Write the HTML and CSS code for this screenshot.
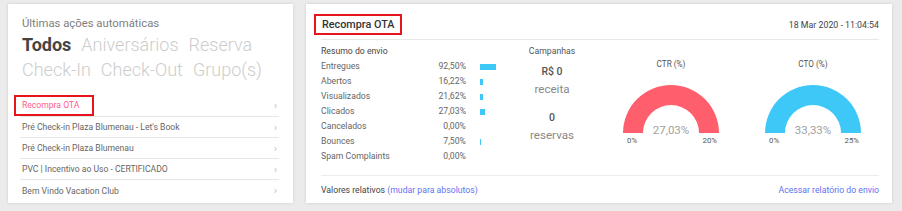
FILE: index.html
```html
<!DOCTYPE html>
<html lang="pt-BR">
<head>
<meta charset="utf-8">
<title>Ações automáticas</title>
<link rel="stylesheet" href="styles.css">
</head>
<body>
<div class="page">
  <section class="card left">
    <div class="subtitle">Últimas ações automáticas</div>
    <div class="tabs">
      <span class="tab active">Todos</span>
      <span class="tab">Aniversários</span>
      <span class="tab">Reserva</span>
      <span class="tab">Check-In</span>
      <span class="tab">Check-Out</span>
      <span class="tab">Grupo(s)</span>
    </div>
    <ul class="actions">
      <li class="action selected"><span class="mark">Recompra OTA</span><span class="chev">›</span></li>
      <li class="action"><span>Pré Check-in Plaza Blumenau - Let's Book</span><span class="chev">›</span></li>
      <li class="action"><span>Pré Check-in Plaza Blumenau</span><span class="chev">›</span></li>
      <li class="action"><span>PVC | Incentivo ao Uso - CERTIFICADO</span><span class="chev">›</span></li>
      <li class="action"><span>Bem Vindo Vacation Club</span><span class="chev">›</span></li>
    </ul>
  </section>

  <section class="card right">
    <header class="head">
      <span class="mark head-title">Recompra OTA</span>
      <span class="date">18 Mar 2020 - 11:04:54</span>
    </header>
    <div class="body">
      <div class="stats">
        <div class="stats-title">Resumo do envio</div>
        <div class="stat"><span class="lbl">Entregues</span><span class="val">92,50%</span><span class="bar-cell"><i class="bar" style="width:16px"></i></span></div>
        <div class="stat"><span class="lbl">Abertos</span><span class="val">16,22%</span><span class="bar-cell"><i class="bar" style="width:3px"></i></span></div>
        <div class="stat"><span class="lbl">Visualizados</span><span class="val">21,62%</span><span class="bar-cell"><i class="bar" style="width:3px"></i></span></div>
        <div class="stat"><span class="lbl">Clicados</span><span class="val">27,03%</span><span class="bar-cell"><i class="bar" style="width:5px"></i></span></div>
        <div class="stat"><span class="lbl">Cancelados</span><span class="val">0,00%</span><span class="bar-cell"></span></div>
        <div class="stat"><span class="lbl">Bounces</span><span class="val">7,50%</span><span class="bar-cell"><i class="bar" style="width:1px"></i></span></div>
        <div class="stat"><span class="lbl">Spam Complaints</span><span class="val">0,00%</span><span class="bar-cell"></span></div>
      </div>
      <div class="camp">
        <div class="camp-title">Campanhas</div>
        <div class="camp-num">R$ 0</div>
        <div class="camp-lbl">receita</div>
        <div class="camp-num second">0</div>
        <div class="camp-lbl">reservas</div>
      </div>
      <div class="gauge-col ctr">
        <div class="gauge-title">CTR (%)</div>
        <div class="gauge">
          <svg width="98" height="49" viewBox="0 0 98 49"><path d="M1 49 A48 48 0 0 1 97 49 L77 49 A28 28 0 0 0 21 49 Z" fill="#ff5f6d"/></svg>
          <span class="gauge-val">27,03%</span>
        </div>
        <div class="gauge-scale"><span>0%</span><span>20%</span></div>
      </div>
      <div class="gauge-col cto">
        <div class="gauge-title">CTO (%)</div>
        <div class="gauge">
          <svg width="98" height="49" viewBox="0 0 98 49"><path d="M1 49 A48 48 0 0 1 97 49 L77 49 A28 28 0 0 0 21 49 Z" fill="#3ec8f8"/></svg>
          <span class="gauge-val">33,33%</span>
        </div>
        <div class="gauge-scale"><span>0%</span><span>25%</span></div>
      </div>
    </div>
    <footer class="foot">
      <span>Valores relativos <a class="link">(mudar para absolutos)</a></span>
      <a class="link">Acessar relatório do envio</a>
    </footer>
  </section>
</div>
</body>
</html>
```

FILE: styles.css
```css
* { box-sizing: border-box; }
html, body { margin: 0; padding: 0; }
body {
  background: #ebebeb;
  font-family: Roboto, "Liberation Sans", Arial, sans-serif;
  color: #555;
}
.page {
  display: flex;
  gap: 13px;
  padding: 4px 10px 8px 8px;
  height: 211px;
}
.card {
  background: #fff;
  box-shadow: 0 0 3px rgba(0, 0, 0, 0.13);
  height: 199px;
}
.left {
  width: 285px;
  padding: 12px 14px 0 12px;
}
.subtitle {
  font-size: 11.3px;
  line-height: 16px;
  color: #7e7e7e;
  padding-left: 2px;
}
.tabs {
  display: flex;
  flex-wrap: wrap;
  column-gap: 10px;
  font-size: 18px;
  line-height: 25px;
  padding-left: 2px;
}
.tab { color: #cdcdcd; font-weight: 300; }
.tab.active { color: #444; font-weight: 700; }
.actions {
  list-style: none;
  margin: 14px 0 0;
  padding: 0;
}
.action {
  display: flex;
  justify-content: space-between;
  align-items: center;
  height: 21px;
  border-bottom: 1px solid #e6e6e6;
  font-size: 8.6px;
  color: #666;
  padding-left: 2px;
  padding-right: 2px;
}
.action:last-child { border-bottom: 0; }
.action.selected { color: #ff5a8a; align-items: flex-start; }
.chev { color: #c4c4c4; font-size: 11px; }
.action.selected .chev { line-height: 20px; }
.mark {
  border: 2px solid #e8141c;
}
.action .mark {
  margin-left: -8px;
  margin-top: -1px;
  padding: 0 13px 0 6px;
  height: 21px;
  line-height: 17px;
}

.right {
  width: 586px;
  padding: 10px 13px 0 15px;
  display: flex;
  flex-direction: column;
}
.head {
  display: flex;
  justify-content: space-between;
  align-items: center;
  height: 26px;
  padding-bottom: 4px;
  border-bottom: 1px solid #e8e8e8;
}
.head-title {
  margin-left: -7px;
  padding: 0 6px;
  font-size: 10.8px;
  height: 21px;
  display: flex;
  align-items: center;
  color: #333;
  font-weight: 500;
}
.date { font-size: 8.8px; color: #444; }
.body {
  display: flex;
  padding-top: 4px;
  height: 136px;
  border-bottom: 1px solid #ececec;
}
.stats { width: 192px; font-size: 8.7px; line-height: 15px; }
.stats-title { color: #444; }
.stat { display: flex; align-items: center; height: 15px; }
.lbl { width: 100px; color: #666; }
.val { width: 45px; text-align: right; color: #666; }
.bar-cell { margin-left: 14px; display: flex; align-items: center; }
.bar { display: block; height: 6px; background: #3ec8f8; }

.camp { width: 78px; text-align: center; }
.camp-title { font-size: 8.7px; line-height: 15px; color: #555; }
.camp-num { font-size: 10.5px; font-weight: 500; color: #555; margin-top: 5px; line-height: 16px; }
.camp-num.second { margin-top: 12px; }
.camp-lbl { font-size: 11.6px; color: #888; line-height: 18px; }

.gauge-col { display: flex; flex-direction: column; align-items: center; }
.ctr { width: 160px; }
.cto { width: 124px; }
.gauge-title { font-size: 8.2px; color: #555; margin-top: 13px; line-height: 14px; }
.gauge { position: relative; margin-top: 13px; width: 98px; height: 49px; }
.gauge svg { display: block; }
.gauge-val {
  position: absolute;
  left: 0; right: 0;
  bottom: -4px;
  text-align: center;
  font-size: 11.5px;
  color: #a0a0a0;
}
.gauge-scale {
  width: 98px;
  display: flex;
  justify-content: space-between;
  font-size: 7.8px;
  color: #555;
  padding: 0 3px 0 5px;
  margin-top: 3px;
  line-height: 10px;
}
.foot {
  display: flex;
  justify-content: space-between;
  align-items: center;
  height: 27px;
  font-size: 8.7px;
  color: #444;
}
.link { color: #6472f2; }
```
